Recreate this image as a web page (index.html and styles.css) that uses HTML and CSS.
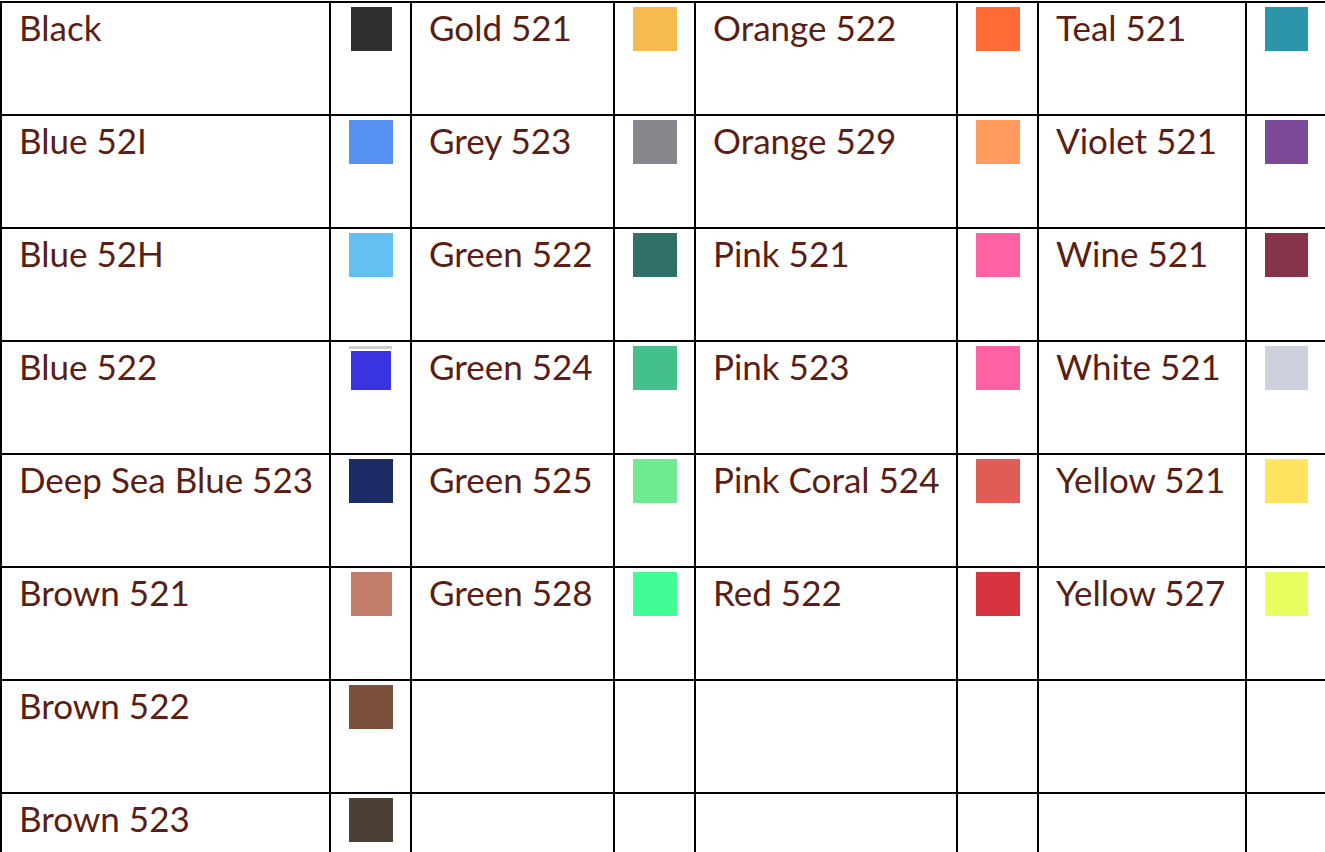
FILE: index.html
```html
<!DOCTYPE html>
<html lang="en">
<head>
<meta charset="utf-8">
<title>Colour chart</title>
<link rel="stylesheet" href="styles.css">
</head>
<body>
<table class="chart">
  <colgroup>
    <col class="c-name1"><col class="c-sw"><col class="c-name2"><col class="c-sw"><col class="c-name3"><col class="c-sw"><col class="c-name4"><col class="c-sw last">
  </colgroup>
  <tbody>
    <tr>
      <td class="name">Black</td><td class="sw"><span class="swatch narrow" style="background:#2f2f2f"></span></td>
      <td class="name">Gold 521</td><td class="sw"><span class="swatch" style="background:#f5bb4f"></span></td>
      <td class="name">Orange 522</td><td class="sw"><span class="swatch" style="background:#fe6b37"></span></td>
      <td class="name">Teal 521</td><td class="sw"><span class="swatch" style="background:#2c95a9"></span></td>
    </tr>
    <tr>
      <td class="name">Blue 52I</td><td class="sw"><span class="swatch" style="background:#5791f5"></span></td>
      <td class="name">Grey 523</td><td class="sw"><span class="swatch" style="background:#87868c"></span></td>
      <td class="name">Orange 529</td><td class="sw"><span class="swatch" style="background:#fe9a5b"></span></td>
      <td class="name">Violet 521</td><td class="sw"><span class="swatch" style="background:#7c4898"></span></td>
    </tr>
    <tr>
      <td class="name">Blue 52H</td><td class="sw"><span class="swatch" style="background:#64bff3"></span></td>
      <td class="name">Green 522</td><td class="sw"><span class="swatch" style="background:#306f6a"></span></td>
      <td class="name">Pink 521</td><td class="sw"><span class="swatch" style="background:#fe62a2"></span></td>
      <td class="name">Wine 521</td><td class="sw"><span class="swatch" style="background:#86344a"></span></td>
    </tr>
    <tr>
      <td class="name">Blue 522</td><td class="sw"><span class="swatch barred" style="background:#3a34e0"></span></td>
      <td class="name">Green 524</td><td class="sw"><span class="swatch" style="background:#43c08b"></span></td>
      <td class="name">Pink 523</td><td class="sw"><span class="swatch" style="background:#fe62a2"></span></td>
      <td class="name">White 521</td><td class="sw"><span class="swatch" style="background:#ced0dc"></span></td>
    </tr>
    <tr>
      <td class="name">Deep Sea Blue 523</td><td class="sw"><span class="swatch" style="background:#1c2c66"></span></td>
      <td class="name">Green 525</td><td class="sw"><span class="swatch" style="background:#6fe992"></span></td>
      <td class="name">Pink Coral 524</td><td class="sw"><span class="swatch" style="background:#e05c55"></span></td>
      <td class="name">Yellow 521</td><td class="sw"><span class="swatch" style="background:#fee45f"></span></td>
    </tr>
    <tr>
      <td class="name">Brown 521</td><td class="sw"><span class="swatch narrow" style="background:#c27e6a"></span></td>
      <td class="name">Green 528</td><td class="sw"><span class="swatch" style="background:#40fd97"></span></td>
      <td class="name">Red 522</td><td class="sw"><span class="swatch" style="background:#d6353f"></span></td>
      <td class="name">Yellow 527</td><td class="sw"><span class="swatch" style="background:#e9fe61"></span></td>
    </tr>
    <tr>
      <td class="name">Brown 522</td><td class="sw"><span class="swatch" style="background:#7a4f3c"></span></td>
      <td class="name"></td><td class="sw"></td>
      <td class="name"></td><td class="sw"></td>
      <td class="name"></td><td class="sw"></td>
    </tr>
    <tr>
      <td class="name">Brown 523</td><td class="sw"><span class="swatch" style="background:#4a4033"></span></td>
      <td class="name"></td><td class="sw"></td>
      <td class="name"></td><td class="sw"></td>
      <td class="name"></td><td class="sw"></td>
    </tr>
  </tbody>
</table>
</body>
</html>
```

FILE: styles.css
```css
html, body {
  margin: 0;
  padding: 0;
  background: #ffffff;
  overflow: hidden;
}

body {
  padding-top: 1px;
  font-family: "Lato", "Liberation Sans", sans-serif;
  color: #5a1e14;
}

.chart {
  border-collapse: separate;
  border-spacing: 0;
  table-layout: fixed;
  width: 1325px;
}

.c-name1 { width: 329px; }
.c-name2 { width: 203px; }
.c-name3 { width: 262px; }
.c-name4 { width: 208px; }
.c-sw { width: 81px; }
.c-sw.last { width: 80px; }

.chart td {
  border-left: 2px solid #000;
  border-top: 2px solid #000;
  height: 111px;
  padding: 0;
  vertical-align: top;
  box-sizing: content-box;
}

.name {
  font-size: 35px;
  line-height: 40px;
  white-space: nowrap;
}

.chart td.name {
  height: 107px;
  padding: 4px 0 0 17px;
}

.sw {
  text-align: center;
}

.swatch {
  display: block;
  width: 44px;
  height: 44px;
  margin: 4px auto 0;
}

.chart td:last-child .swatch {
  width: 43px;
  margin-left: 18px;
}

.swatch.narrow {
  width: 41px;
  margin-left: 20px;
}

.swatch.barred {
  height: 39px;
  margin-top: 9px;
  width: 40px;
  position: relative;
}

.swatch.barred::before {
  content: "";
  position: absolute;
  left: -2px;
  right: -1px;
  top: -5px;
  height: 3px;
  background: #cccccc;
}
```
